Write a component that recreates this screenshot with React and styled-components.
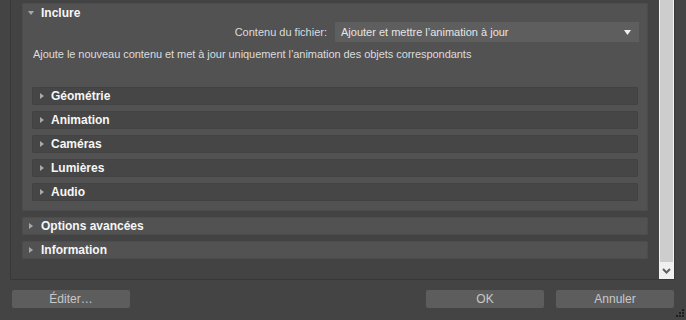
import React from 'react'
import styled, { createGlobalStyle } from 'styled-components'

const GlobalStyle = createGlobalStyle`
  html, body {
    margin: 0;
    padding: 0;
    background: #444444;
  }
  body {
    font-family: "Liberation Sans", Arial, sans-serif;
    font-size: 11px;
    color: #dcdcdc;
  }
`

const Window = styled.div`
  position: relative;
  width: 686px;
  height: 320px;
  background: #444444;
  overflow: hidden;
`

const ScrollFrame = styled.div`
  display: flex;
  height: 280px;
  margin: 0 11px 0 10px;
  box-sizing: border-box;
  border: 1px solid #383838;
  border-top: none;
`

const Content = styled.div`
  flex: 1;
  display: flex;
  flex-direction: column;
  gap: 6px;
  padding: 3px 11px 0 11px;
  background: #434343;
`

const Scrollbar = styled.div`
  width: 15px;
  display: flex;
  flex-direction: column;
  background: #f0f0f0;
  box-sizing: border-box;
  border-left: 1px solid #f4f4f4;
  border-right: 1px solid #f4f4f4;
`

const Thumb = styled.div`
  flex: 1;
  background: #cdcdcd;
`

const ArrowButton = styled.div`
  height: 17px;
  display: flex;
  align-items: center;
  justify-content: center;
  background: #f0f0f0;
`

const Panel = styled.div`
  background: #525252;
  border-radius: 2px;
  box-shadow: inset 0 0 0 1px #4c4c4c;
  padding: ${p => (p.open ? '0 10px 10px 10px' : '0')};
`

const Header = styled.div`
  display: flex;
  align-items: center;
  height: ${p => p.h}px;
  padding-left: ${p => p.pad}px;
  gap: ${p => p.gap}px;
  font-size: 12px;
  font-weight: bold;
  color: #f6f6f6;
`

const SubPanel = styled.div`
  background: #464646;
  border-radius: 2px;
  box-shadow: inset 0 0 0 1px #424242;
`

const SubList = styled.div`
  display: flex;
  flex-direction: column;
  gap: 6px;
  margin-top: 26px;
`

const FieldRow = styled.div`
  display: flex;
  align-items: center;
  justify-content: flex-end;
  gap: 8px;
  margin-right: -1px;
`

const Label = styled.span`
  color: #dcdcdc;
`

const Select = styled.div`
  width: 304px;
  height: 20px;
  box-sizing: border-box;
  display: flex;
  align-items: center;
  justify-content: space-between;
  padding: 0 8px 0 6px;
  background: #5e5e5e;
  color: #e6e6e6;
`

const Description = styled.div`
  margin: 5px 0 0 1px;
  line-height: 14px;
  letter-spacing: -0.05px;
  color: #dcdcdc;
`

const Footer = styled.div`
  display: flex;
  align-items: center;
  padding: 10px 12px 0 12px;
`

const Button = styled.div`
  width: 118px;
  height: 18px;
  display: flex;
  align-items: center;
  justify-content: center;
  background: #5d5d5d;
  border-radius: 2px;
  color: #c8c8c8;
  font-size: 12px;
  margin-left: ${p => p.ml || 0}px;
`

const Spacer = styled.div`
  flex: 1;
`

const Grip = styled.svg`
  position: absolute;
  right: 1px;
  bottom: 2px;
`

const Tri = ({ down }) => (
  <svg width="6" height="6" viewBox="0 0 6 6">
    {down ? (
      <polygon points="0,1 6,1 3,5" fill="#a8a8a8" />
    ) : (
      <polygon points="1,0 5,3 1,6" fill="#a8a8a8" />
    )}
  </svg>
)

const subs = ['Géométrie', 'Animation', 'Caméras', 'Lumières', 'Audio']

export default function App() {
  return (
    <Window>
      <GlobalStyle />
      <ScrollFrame>
        <Content>
          <Panel open>
            <Header h={19} pad={6} gap={7} style={{ marginLeft: -10 }}>
              <Tri down />
              Inclure
            </Header>
            <FieldRow>
              <Label>Contenu du fichier:</Label>
              <Select>
                Ajouter et mettre l’animation à jour
                <svg width="7" height="5" viewBox="0 0 7 5">
                  <polygon points="0,0 7,0 3.5,5" fill="#f0f0f0" />
                </svg>
              </Select>
            </FieldRow>
            <Description>
              Ajoute le nouveau contenu et met à jour uniquement l’animation des objets correspondants
            </Description>
            <SubList>
              {subs.map(s => (
                <SubPanel key={s}>
                  <Header h={18} pad={7} gap={6}>
                    <Tri />
                    {s}
                  </Header>
                </SubPanel>
              ))}
            </SubList>
          </Panel>
          <Panel>
            <Header h={18} pad={6} gap={7}>
              <Tri />
              Options avancées
            </Header>
          </Panel>
          <Panel>
            <Header h={18} pad={6} gap={7}>
              <Tri />
              Information
            </Header>
          </Panel>
        </Content>
        <Scrollbar>
          <Thumb />
          <ArrowButton>
            <svg width="9" height="6" viewBox="0 0 9 6">
              <polyline points="1,1 4.5,4.5 8,1" fill="none" stroke="#606060" strokeWidth="2" />
            </svg>
          </ArrowButton>
        </Scrollbar>
      </ScrollFrame>
      <Footer>
        <Button>Éditer…</Button>
        <Spacer />
        <Button>OK</Button>
        <Button ml={12}>Annuler</Button>
      </Footer>
      <Grip width="10" height="10" viewBox="0 0 10 10">
        <rect x="7" y="1" width="2" height="2" fill="#1e1e1e" />
        <rect x="4" y="4" width="2" height="2" fill="#1e1e1e" />
        <rect x="7" y="4" width="2" height="2" fill="#1e1e1e" />
        <rect x="1" y="7" width="2" height="2" fill="#1e1e1e" />
        <rect x="4" y="7" width="2" height="2" fill="#1e1e1e" />
        <rect x="7" y="7" width="2" height="2" fill="#1e1e1e" />
      </Grip>
    </Window>
  )
}
